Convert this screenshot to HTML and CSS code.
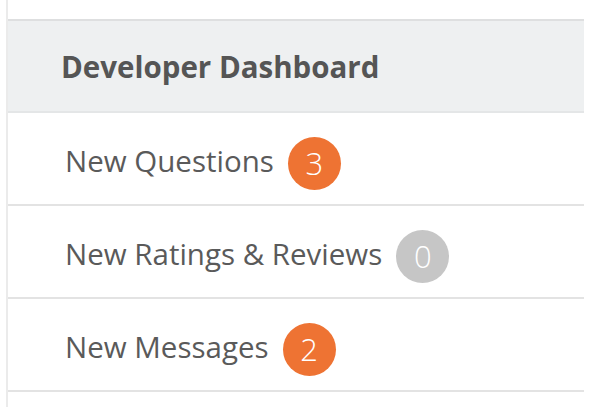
FILE: index.html
```html
<!DOCTYPE html>
<html>
<head>
<meta charset="utf-8">
<link rel="stylesheet" href="styles.css">
</head>
<body>
<div class="panel">
  <div class="panel-header">Developer Dashboard</div>
  <div class="row"><span class="label">New Questions</span><span class="badge badge-orange">3</span></div>
  <div class="row"><span class="label">New Ratings &amp; Reviews</span><span class="badge badge-gray">0</span></div>
  <div class="row"><span class="label">New Messages</span><span class="badge badge-orange">2</span></div>
</div>
</body>
</html>
```
FILE: styles.css
```css
html, body {
  margin: 0;
  padding: 0;
  background: #ffffff;
}
body {
  font-family: "Open Sans", "Liberation Sans", sans-serif;
  height: 407px;
  overflow: hidden;
}
.panel {
  margin-left: 6px;
  width: 578px;
  height: 407px;
  border-left: 2px solid #ebebeb;
  padding-top: 19px;
  box-sizing: border-box;
}
.panel-header {
  height: 89px;
  padding-top: 1px;
  border-top: 2px solid #dedfe0;
  border-bottom: 2px solid #e4e6e7;
  background: #eef0f1;
  display: flex;
  align-items: center;
  padding-left: 53px;
  font-size: 29.5px;
  font-weight: 700;
  color: #555555;
}
.row {
  height: 88px;
  padding-top: 3px;
  border-bottom: 2px solid #e3e3e3;
  display: flex;
  align-items: center;
  padding-left: 57px;
  gap: 14px;
}
.label {
  font-size: 29.5px;
  font-weight: 400;
  color: #5a5a5a;
}
.badge {
  width: 53px;
  height: 53px;
  border-radius: 50%;
  display: flex;
  align-items: center;
  justify-content: center;
  color: #ffffff;
  font-size: 31px;
  font-weight: 300;
  margin-top: 6px;
}
.badge-orange {
  background: #ee7333;
}
.badge-gray {
  background: #c6c6c6;
}
```
